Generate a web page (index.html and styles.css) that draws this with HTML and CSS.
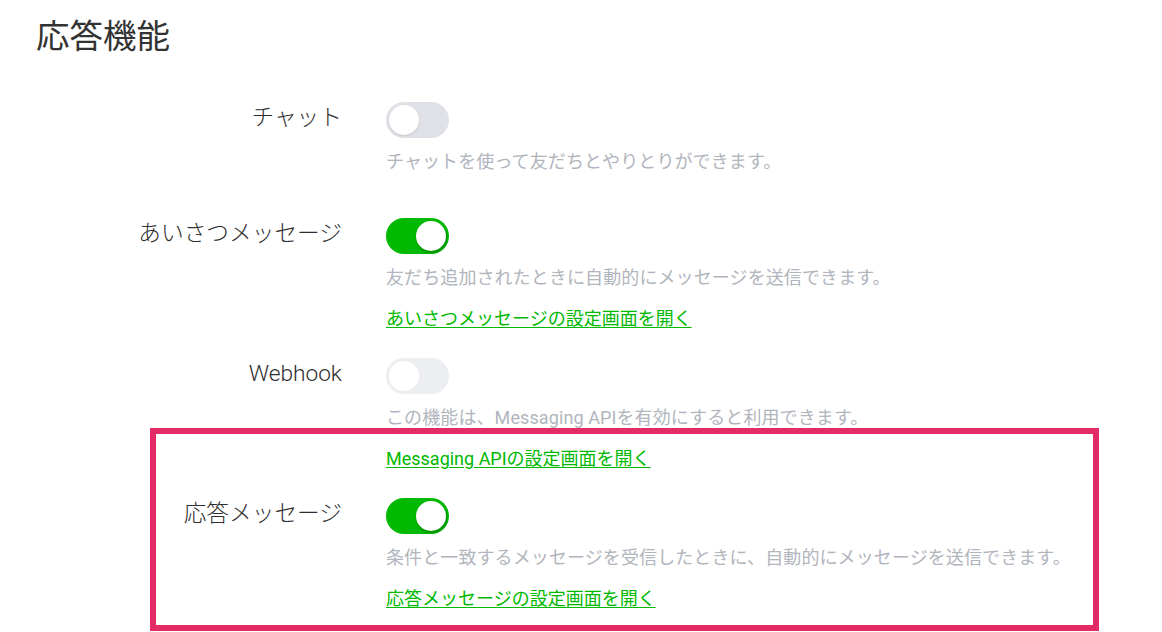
FILE: index.html
```html
<!DOCTYPE html>
<html lang="ja">
<head>
<meta charset="utf-8">
<title>応答機能</title>
<link rel="stylesheet" href="styles.css">
</head>
<body>
<main class="page">
  <h1 class="title">応答機能</h1>
  <div class="settings">
    <div class="row">
      <div class="label">チャット</div>
      <div class="control">
        <span class="toggle"><span class="knob"></span></span>
        <p class="desc">チャットを使って友だちとやりとりができます。</p>
      </div>
    </div>
    <div class="row">
      <div class="label">あいさつメッセージ</div>
      <div class="control">
        <span class="toggle on"><span class="knob"></span></span>
        <p class="desc">友だち追加されたときに自動的にメッセージを送信できます。</p>
        <a class="link" href="#">あいさつメッセージの設定画面を開く</a>
      </div>
    </div>
    <div class="row">
      <div class="label">Webhook</div>
      <div class="control">
        <span class="toggle disabled"><span class="knob"></span></span>
        <p class="desc">この機能は、Messaging APIを有効にすると利用できます。</p>
        <a class="link" href="#">Messaging APIの設定画面を開く</a>
      </div>
    </div>
    <div class="row">
      <div class="label">応答メッセージ</div>
      <div class="control">
        <span class="toggle on"><span class="knob"></span></span>
        <p class="desc">条件と一致するメッセージを受信したときに、自動的にメッセージを送信できます。</p>
        <a class="link" href="#">応答メッセージの設定画面を開く</a>
      </div>
    </div>
  </div>
  <div class="highlight"></div>
</main>
</body>
</html>
```
FILE: styles.css
```css
* { box-sizing: border-box; }
html, body { margin: 0; padding: 0; background: #fff; }
body {
  font-family: Roboto, "Noto Sans CJK JP", sans-serif;
  color: #333;
  width: 1162px;
  height: 632px;
  overflow: hidden;
}
.page {
  position: relative;
  padding-top: 17px;
}
.title {
  margin: 0 0 0 36px;
  font-size: 33.5px;
  line-height: 40px;
  font-weight: 400;
  color: #333;
}
.settings {
  margin-top: 45px;
  display: flex;
  flex-direction: column;
}
.row {
  display: grid;
  grid-template-columns: 342px 1fr;
  column-gap: 44px;
  padding-bottom: 27px;
}
.label {
  text-align: right;
  font-size: 22.7px;
  line-height: 31px;
  font-weight: 300;
  color: #2e2e2e;
}
.control {
  display: flex;
  flex-direction: column;
  align-items: flex-start;
}
.toggle {
  position: relative;
  display: block;
  width: 63px;
  height: 36px;
  border-radius: 18px;
  background: #dfe1e6;
}
.toggle .knob {
  position: absolute;
  top: 3px;
  left: 3px;
  width: 30px;
  height: 30px;
  border-radius: 50%;
  background: #fff;
  box-shadow: 0 1px 2px rgba(0,0,0,0.12);
}
.toggle.on { background: #00b900; }
.toggle.on .knob {
  left: 30px;
  box-shadow: 1px 2px 3px rgba(0,0,0,0.25);
}
.toggle.disabled { background: #eceef1; }
.toggle.disabled .knob { box-shadow: none; }
.desc {
  margin: 12px 0 17px;
  font-size: 18px;
  letter-spacing: 0.1px;
  line-height: 24px;
  color: #b1b5bd;
}
.link {
  font-size: 18px;
  line-height: 24px;
  color: #00b900;
  text-decoration: underline;
  text-underline-offset: 2px;
}
.highlight {
  position: absolute;
  left: 150px;
  top: 428px;
  width: 949px;
  height: 203px;
  border: 6px solid #e32c65;
  pointer-events: none;
}
```
